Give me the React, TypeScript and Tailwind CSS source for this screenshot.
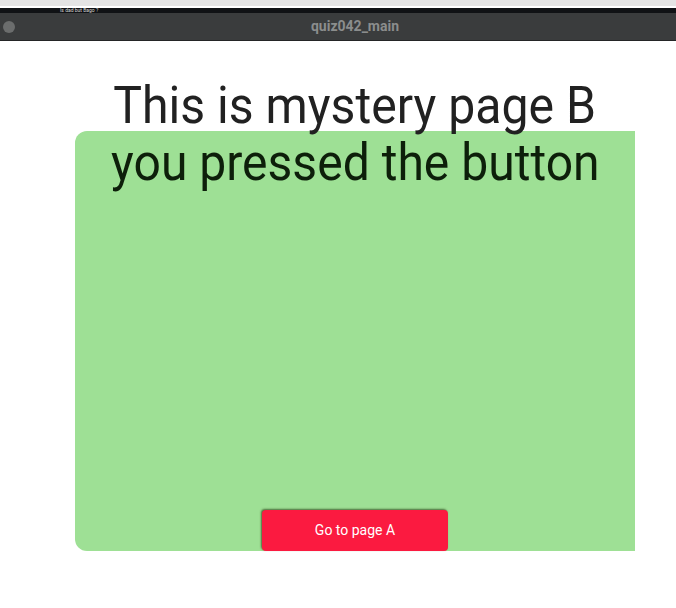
import React from 'react';

export default function App() {
  return (
    <div className="w-[676px] h-[608px] overflow-hidden bg-white" style={{ fontFamily: 'Roboto, "Noto Sans", sans-serif' }}>
      <div className="w-[710px]">
        {/* window chrome */}
        <div className="h-[6px] bg-[#e4e4e4]"></div>
        <div className="h-[2px] bg-white"></div>
        <div className="h-[5px] bg-[#101215] flex items-center pl-[60px]">
          <span className="text-[5px] leading-[5px] text-[#d8d8d8]">Is dad but Bago ?</span>
        </div>
        <div className="h-[28px] bg-[#3a3c3d] border-b border-[#242526] flex items-center relative">
          <div className="ml-[3px] w-[12px] h-[12px] rounded-full bg-[#6b6d6d]"></div>
          <div className="absolute inset-0 flex items-center justify-center">
            <span className="text-[14px] font-bold text-[#8b8d8d]">quiz042_main</span>
          </div>
        </div>

        {/* page */}
        <div className="pt-[37px] flex flex-col items-center">
          <div className="text-[52px] leading-[56px] text-[#212121] whitespace-nowrap scale-x-[0.926]">This is mystery page B</div>
          <div className="mt-[-3px] w-[560px] h-[420px] bg-[#9ee095] rounded-l-xl flex flex-col items-center justify-between">
            <div className="pt-[4px] text-[52px] leading-[56px] text-[#0d1f0a] whitespace-nowrap scale-x-[0.924]">you pressed the button</div>
            <button className="w-[186px] h-[41px] rounded bg-[#fb1a40] text-white text-[14px] shadow-[-1px_-1px_2px_rgba(40,60,20,0.7)]">
              Go to page A
            </button>
          </div>
        </div>
      </div>
    </div>
  );
}
